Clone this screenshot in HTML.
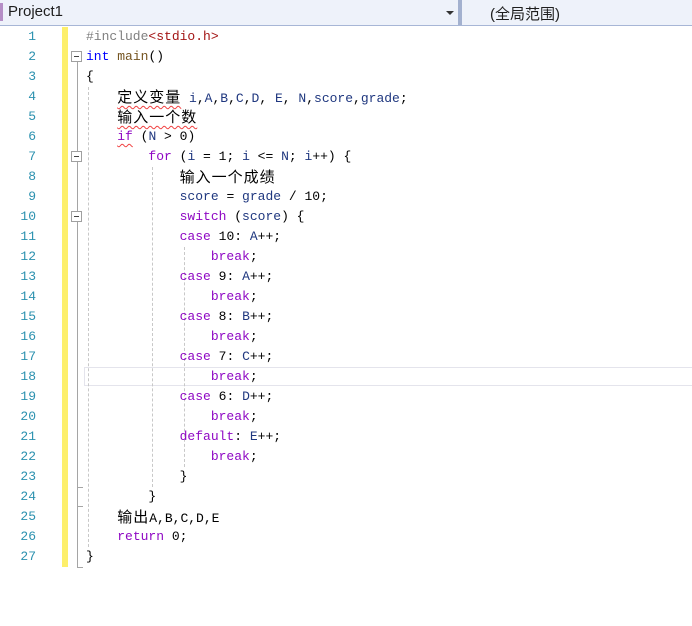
<!DOCTYPE html>
<html><head><meta charset="utf-8"><style>
body{margin:0;width:692px;height:626px;background:#fff;position:relative;overflow:hidden;font-family:"Liberation Mono",monospace;}
.hdr{position:absolute;left:0;top:0;width:692px;height:25px;background:#eef2fa;border-bottom:1px solid #a7b6d6;}
.sep{position:absolute;left:458px;top:0;width:4px;height:25px;background:#a3b1cf;}
.ht{position:absolute;top:3px;font:15px "Liberation Sans","Noto Sans CJK SC",sans-serif;color:#1e1e1e;}
.yel{position:absolute;left:62px;top:27px;width:6px;height:540px;background:#fdef6b;}
.fl{position:absolute;left:77px;width:1px;background:#a5a5a5;}
.fb{position:absolute;left:71px;width:9px;height:9px;border:1px solid #a0a0a0;background:#fff;}
.fb:after{content:"";position:absolute;left:2px;top:4px;width:5px;height:1px;background:#444;}
.g{position:absolute;width:0;border-left:1px dashed #c8c8c8;}
.ln{position:absolute;left:0;width:36px;text-align:right;color:#2b91af;font-size:13px;line-height:20px;height:20px;}
.l{position:absolute;left:86px;white-space:pre;font-size:13px;line-height:20px;height:20px;color:#000;}
.c{font-family:"Noto Sans CJK SC","WenQuanYi Zen Hei",sans-serif;font-size:15px;letter-spacing:1px;}
.w{text-decoration:underline wavy #f04040;text-underline-offset:3px;text-decoration-thickness:1px;}
.k{color:#8f08c4}.b{color:#0000ff}.v{color:#1f377f}.f{color:#74531f}.p{color:#808080}.s{color:#a31515}
.cur{position:absolute;left:84px;top:367px;width:620px;height:17px;border:1px solid #e4e4ec;}
</style></head><body>
<div class="hdr"></div>
<div style="position:absolute;left:0;top:3px;width:3px;height:18px;background:#b58ec6"></div>
<div class="ht" style="left:8px">Project1</div>
<div style="position:absolute;left:446px;top:11px;width:0;height:0;border-left:4px solid transparent;border-right:4px solid transparent;border-top:4px solid #333"></div>
<div class="sep"></div>
<div class="ht" style="left:490px">(全局范围)</div>

<div class="yel"></div>
<div class="cur"></div>
<div class="fl" style="top:62px;height:505px"></div>
<div style="position:absolute;left:77px;top:567px;width:6px;height:1px;background:#a5a5a5"></div>
<div style="position:absolute;left:77px;top:487px;width:6px;height:1px;background:#a5a5a5"></div>
<div style="position:absolute;left:77px;top:506px;width:6px;height:1px;background:#a5a5a5"></div>
<div class="fb" style="top:51px"></div>
<div class="fb" style="top:151px"></div>
<div class="fb" style="top:211px"></div>
<div class="g" style="left:88px;top:87px;height:460px"></div>
<div class="g" style="left:152px;top:167px;height:320px"></div>
<div class="g" style="left:184px;top:247px;height:220px"></div>

<div class="ln" style="top:27px">1</div><div class="ln" style="top:47px">2</div><div class="ln" style="top:67px">3</div><div class="ln" style="top:87px">4</div><div class="ln" style="top:107px">5</div><div class="ln" style="top:127px">6</div><div class="ln" style="top:147px">7</div><div class="ln" style="top:167px">8</div><div class="ln" style="top:187px">9</div><div class="ln" style="top:207px">10</div><div class="ln" style="top:227px">11</div><div class="ln" style="top:247px">12</div><div class="ln" style="top:267px">13</div><div class="ln" style="top:287px">14</div><div class="ln" style="top:307px">15</div><div class="ln" style="top:327px">16</div><div class="ln" style="top:347px">17</div><div class="ln" style="top:367px">18</div><div class="ln" style="top:387px">19</div><div class="ln" style="top:407px">20</div><div class="ln" style="top:427px">21</div><div class="ln" style="top:447px">22</div><div class="ln" style="top:467px">23</div><div class="ln" style="top:487px">24</div><div class="ln" style="top:507px">25</div><div class="ln" style="top:527px">26</div><div class="ln" style="top:547px">27</div>

<div class="l" style="top:27px"><span class="p">#include</span><span class="s">&lt;stdio.h&gt;</span></div>
<div class="l" style="top:47px"><span class="b">int</span> <span class="f">main</span>()</div>
<div class="l" style="top:67px">{</div>
<div class="l" style="top:87px">    <span class="c w">定义变量</span> <span class="v">i</span>,<span class="v">A</span>,<span class="v">B</span>,<span class="v">C</span>,<span class="v">D</span>, <span class="v">E</span>, <span class="v">N</span>,<span class="v">score</span>,<span class="v">grade</span>;</div>
<div class="l" style="top:107px">    <span class="c w">输入一个数</span></div>
<div class="l" style="top:127px">    <span class="k w">if</span> (<span class="v">N</span> &gt; 0)</div>
<div class="l" style="top:147px">        <span class="k">for</span> (<span class="v">i</span> = 1; <span class="v">i</span> &lt;= <span class="v">N</span>; <span class="v">i</span>++) {</div>
<div class="l" style="top:167px">            <span class="c">输入一个成绩</span></div>
<div class="l" style="top:187px">            <span class="v">score</span> = <span class="v">grade</span> / 10;</div>
<div class="l" style="top:207px">            <span class="k">switch</span> (<span class="v">score</span>) {</div>
<div class="l" style="top:227px">            <span class="k">case</span> 10: <span class="v">A</span>++;</div>
<div class="l" style="top:247px">                <span class="k">break</span>;</div>
<div class="l" style="top:267px">            <span class="k">case</span> 9: <span class="v">A</span>++;</div>
<div class="l" style="top:287px">                <span class="k">break</span>;</div>
<div class="l" style="top:307px">            <span class="k">case</span> 8: <span class="v">B</span>++;</div>
<div class="l" style="top:327px">                <span class="k">break</span>;</div>
<div class="l" style="top:347px">            <span class="k">case</span> 7: <span class="v">C</span>++;</div>
<div class="l" style="top:367px">                <span class="k">break</span>;</div>
<div class="l" style="top:387px">            <span class="k">case</span> 6: <span class="v">D</span>++;</div>
<div class="l" style="top:407px">                <span class="k">break</span>;</div>
<div class="l" style="top:427px">            <span class="k">default</span>: <span class="v">E</span>++;</div>
<div class="l" style="top:447px">                <span class="k">break</span>;</div>
<div class="l" style="top:467px">            }</div>
<div class="l" style="top:487px">        }</div>
<div class="l" style="top:507px">    <span class="c">输出</span>A,B,C,D,E</div>
<div class="l" style="top:527px">    <span class="k">return</span> 0;</div>
<div class="l" style="top:547px">}</div>
</body></html>
